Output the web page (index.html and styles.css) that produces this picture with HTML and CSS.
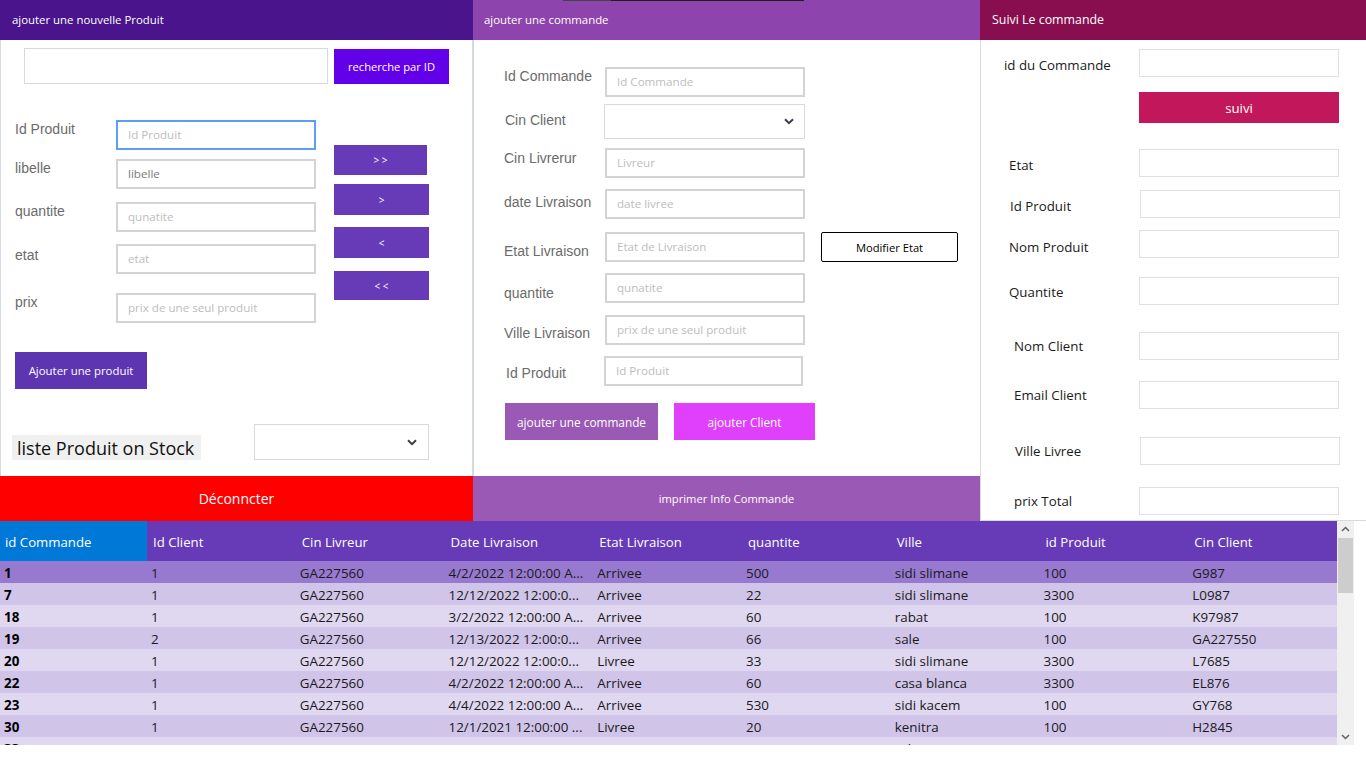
FILE: index.html
```html
<!DOCTYPE html>
<html lang="fr">
<head>
<meta charset="utf-8">
<title>Gestion Commandes</title>
<link rel="stylesheet" href="styles.css">
</head>
<body>
<div class="top">
  <section class="panel">
    <header class="ph ph-1">ajouter une nouvelle Produit</header>
    <div class="pbody p1-body">
      <div class="search-row">
        <input class="search-input" type="text">
        <button class="btn btn-search">recherche par ID</button>
      </div>
      <div class="p1-main">
        <div class="p1-form">
          <div class="frow"><label class="lab1">Id Produit</label><input class="fld fld-focus" placeholder="Id Produit"></div>
          <div class="frow mt-9"><label class="lab1">libelle</label><input class="fld fld-val" value="libelle"></div>
          <div class="frow mt-13"><label class="lab1">quantite</label><input class="fld" placeholder="qunatite"></div>
          <div class="frow mt-12"><label class="lab1 pt-3">etat</label><input class="fld" placeholder="etat"></div>
          <div class="frow mt-19"><label class="lab1">prix</label><input class="fld" placeholder="prix de une seul produit"></div>
        </div>
        <div class="arrows">
          <button class="btn btn-arrow a1">&gt; &gt;</button>
          <button class="btn btn-arrow a2">&gt;</button>
          <button class="btn btn-arrow a3">&lt;</button>
          <button class="btn btn-arrow a4">&lt; &lt;</button>
        </div>
      </div>
      <button class="btn btn-add-prod">Ajouter une produit</button>
      <div class="stock-row">
        <span class="stock-label">liste Produit on Stock</span>
        <div class="select sel-stock"><svg class="chev" width="10" height="7" viewBox="0 0 10 7"><path d="M1 1.2 L5 5.2 L9 1.2" fill="none" stroke="#3a3f4a" stroke-width="2"/></svg></div>
      </div>
    </div>
    <button class="bar bar-red">Déconncter</button>
  </section>

  <section class="panel">
    <header class="ph ph-2"><div class="strip"></div><span class="ph-text">ajouter une commande</span></header>
    <div class="pbody p2-body">
      <div class="frow"><label class="lab1">Id Commande</label><input class="fld" placeholder="Id Commande"></div>
      <div class="frow mt-7"><label class="lab1 pt-8 pl-1">Cin Client</label><div class="select sel-client"><svg class="chev" width="10" height="7" viewBox="0 0 10 7"><path d="M1 1.2 L5 5.2 L9 1.2" fill="none" stroke="#3a3f4a" stroke-width="2"/></svg></div></div>
      <div class="frow mt-9"><label class="lab1 pt-2">Cin Livrerur</label><input class="fld" placeholder="Livreur"></div>
      <div class="frow mt-11"><label class="lab1 pt-5">date Livraison</label><input class="fld" placeholder="date livree"></div>
      <div class="frow mt-13"><label class="lab1 pt-11">Etat Livraison</label><input class="fld" placeholder="Etat de Livraison"><button class="btn-modif">Modifier Etat</button></div>
      <div class="frow mt-11"><label class="lab1 pt-12">quantite</label><input class="fld" placeholder="qunatite"></div>
      <div class="frow mt-12"><label class="lab1 pt-10">Ville Livraison</label><input class="fld" placeholder="prix de une seul produit"></div>
      <div class="frow mt-11"><label class="lab1 pt-9 pl-2">Id Produit</label><input class="fld fld-left fld-narrow" placeholder="Id Produit"></div>
      <div class="cmd-actions">
        <button class="btn btn-add-cmd">ajouter une commande</button>
        <button class="btn btn-add-client">ajouter Client</button>
      </div>
    </div>
    <button class="bar bar-print">imprimer Info Commande</button>
  </section>

  <section class="panel">
    <header class="ph ph-3">Suivi Le commande</header>
    <div class="pbody p3-body">
      <div class="srow"><label class="lab3 la">id du Commande</label><input class="fld3"></div>
      <button class="btn btn-suivi">suivi</button>
      <div class="srow mt-26"><label class="lab3 lb">Etat</label><input class="fld3"></div>
      <div class="srow mt-13"><label class="lab3 lb sh">Id Produit</label><input class="fld3"></div>
      <div class="srow mt-12"><label class="lab3 lb low">Nom Produit</label><input class="fld3"></div>
      <div class="srow mt-19"><label class="lab3 lb mid">Quantite</label><input class="fld3"></div>
      <div class="srow mt-27"><label class="lab3 lc">Nom Client</label><input class="fld3"></div>
      <div class="srow mt-21"><label class="lab3 lc">Email Client</label><input class="fld3"></div>
      <div class="srow mt-28"><label class="lab3 ld">Ville Livree</label><input class="fld3"></div>
      <div class="srow mt-22"><label class="lab3 lc">prix Total</label><input class="fld3"></div>
    </div>
  </section>
</div>

<div class="data">
  <div class="dg">
    <div class="dg-head">
      <div class="hc first">id Commande</div>
      <div class="hc">Id Client</div>
      <div class="hc">Cin Livreur</div>
      <div class="hc">Date Livraison</div>
      <div class="hc">Etat Livraison</div>
      <div class="hc">quantite</div>
      <div class="hc">Ville</div>
      <div class="hc">id Produit</div>
      <div class="hc">Cin Client</div>
    </div>
    <div class="dg-row sel"><div class="c b">1</div><div class="c">1</div><div class="c">GA227560</div><div class="c">4/2/2022 12:00:00 A...</div><div class="c">Arrivee</div><div class="c">500</div><div class="c">sidi slimane</div><div class="c">100</div><div class="c">G987</div></div>
    <div class="dg-row"><div class="c b">7</div><div class="c">1</div><div class="c">GA227560</div><div class="c">12/12/2022 12:00:0...</div><div class="c">Arrivee</div><div class="c">22</div><div class="c">sidi slimane</div><div class="c">3300</div><div class="c">L0987</div></div>
    <div class="dg-row"><div class="c b">18</div><div class="c">1</div><div class="c">GA227560</div><div class="c">3/2/2022 12:00:00 A...</div><div class="c">Arrivee</div><div class="c">60</div><div class="c">rabat</div><div class="c">100</div><div class="c">K97987</div></div>
    <div class="dg-row"><div class="c b">19</div><div class="c">2</div><div class="c">GA227560</div><div class="c">12/13/2022 12:00:0...</div><div class="c">Arrivee</div><div class="c">66</div><div class="c">sale</div><div class="c">100</div><div class="c">GA227550</div></div>
    <div class="dg-row"><div class="c b">20</div><div class="c">1</div><div class="c">GA227560</div><div class="c">12/12/2022 12:00:0...</div><div class="c">Livree</div><div class="c">33</div><div class="c">sidi slimane</div><div class="c">3300</div><div class="c">L7685</div></div>
    <div class="dg-row"><div class="c b">22</div><div class="c">1</div><div class="c">GA227560</div><div class="c">4/2/2022 12:00:00 A...</div><div class="c">Arrivee</div><div class="c">60</div><div class="c">casa blanca</div><div class="c">3300</div><div class="c">EL876</div></div>
    <div class="dg-row"><div class="c b">23</div><div class="c">1</div><div class="c">GA227560</div><div class="c">4/4/2022 12:00:00 A...</div><div class="c">Arrivee</div><div class="c">530</div><div class="c">sidi kacem</div><div class="c">100</div><div class="c">GY768</div></div>
    <div class="dg-row"><div class="c b">30</div><div class="c">1</div><div class="c">GA227560</div><div class="c">12/1/2021 12:00:00 ...</div><div class="c">Livree</div><div class="c">20</div><div class="c">kenitra</div><div class="c">100</div><div class="c">H2845</div></div>
    <div class="dg-row"><div class="c b">33</div><div class="c">1</div><div class="c">GA227560</div><div class="c">5/3/2022 12:00:00 A...</div><div class="c">Livree</div><div class="c">30</div><div class="c">rabat</div><div class="c">3300</div><div class="c">L288</div></div>
  </div>
  <div class="vscroll">
    <div class="sb-arrow"><svg width="17" height="17" viewBox="0 0 17 17"><path d="M5 10 L8.5 6.5 L12 10" fill="none" stroke="#606060" stroke-width="1.5"/></svg></div>
    <div class="sb-track"><div class="sb-thumb"></div></div>
    <div class="sb-arrow"><svg width="17" height="17" viewBox="0 0 17 17"><path d="M5 7 L8.5 10.5 L12 7" fill="none" stroke="#606060" stroke-width="1.5"/></svg></div>
  </div>
</div>
</body>
</html>
```

FILE: styles.css
```css
* { box-sizing: border-box; }

body {
  margin: 0;
  width: 1366px;
  height: 768px;
  overflow: hidden;
  background: #ffffff;
  font-family: "Open Sans", "Noto Sans", sans-serif;
}

button { font-family: "Open Sans", "Noto Sans", sans-serif; cursor: pointer; }

input {
  font-family: "Open Sans", "Noto Sans", sans-serif;
  outline: none;
  margin: 0;
}

/* ---------- top three panels ---------- */
.top {
  display: grid;
  grid-template-columns: 473px 507px 386px;
  height: 521px;
}

.panel {
  display: flex;
  flex-direction: column;
  min-height: 0;
}

.ph {
  flex: none;
  height: 40px;
  line-height: 40px;
  color: #ffffff;
  font-size: 11.4px;
  padding-left: 12px;
  white-space: nowrap;
}
.ph-1 { background: #4a148c; }
.ph-2 {
  background: #8e44ad;
  padding-left: 11px;
  display: flex;
  flex-direction: column;
  line-height: normal;
}
.ph-2 .strip {
  flex: none;
  height: 1px;
  width: 241px;
  margin-left: 79px;
  background: linear-gradient(to right, #444444 0 48px, #1e1e1e 48px);
}
.ph-2 .ph-text { flex: 1; display: flex; align-items: center; padding-bottom: 2px; }
.ph-3 { background: #880e4f; font-size: 12.4px; }

.pbody { flex: 1; min-height: 0; }

/* generic fields */
.frow { display: flex; align-items: flex-start; }

.lab1 {
  flex: none;
  width: 101px;
  font-family: "Liberation Sans", Arial, sans-serif;
  font-size: 14px;
  line-height: 16px;
  color: #6b6b6b;
  padding-top: 1px;
}

.fld {
  flex: none;
  width: 200px;
  height: 30px;
  border: 2px solid #d3d3d3;
  padding: 0 0 1px 10px;
  font-size: 11.6px;
  color: #777777;
  background: #ffffff;
}
.fld::placeholder { color: #bdbdbd; }
.fld-focus { border-color: #5c9df7; }
.fld-val { color: #7a7a7a; }
.fld-left { margin-left: -1px; }
.fld-narrow { width: 199px; }

.select {
  flex: none;
  border: 1px solid #d5dae0;
  background: #ffffff;
  display: flex;
  align-items: center;
  justify-content: flex-end;
}
.chev { display: block; }

.btn {
  border: 0;
  padding: 0;
  color: #ffffff;
  font-size: 11.2px;
}

/* spacing utilities */
.mt-7 { margin-top: 7px; }
.mt-9 { margin-top: 9px; }
.mt-11 { margin-top: 11px; }
.mt-12 { margin-top: 12px; }
.mt-13 { margin-top: 13px; }
.mt-19 { margin-top: 19px; }
.mt-21 { margin-top: 21px; }
.mt-22 { margin-top: 22px; }
.mt-26 { margin-top: 26px; }
.mt-27 { margin-top: 27px; }
.mt-28 { margin-top: 28px; }
.pt-2 { padding-top: 2px; }
.pt-3 { padding-top: 3px; }
.pt-5 { padding-top: 5px; }
.pt-8 { padding-top: 8px; }
.pt-9 { padding-top: 9px; }
.pt-10 { padding-top: 10px; }
.pt-11 { padding-top: 11px; }
.pt-12 { padding-top: 12px; }
.pl-1 { padding-left: 1px; }
.pl-2 { padding-left: 2px; }

/* ---------- panel 1 ---------- */
.p1-body {
  border-left: 1px solid #d5dae0;
  border-right: 1px solid #d5dae0;
  padding-top: 8px;
}

.search-row {
  display: flex;
  align-items: flex-start;
  margin-left: 23px;
  gap: 6px;
}
.search-input {
  width: 304px;
  height: 36px;
  border: 1px solid #d5dae0;
  background: #ffffff;
}
.btn-search {
  width: 115px;
  height: 35px;
  margin-top: 1px;
  background: #6200ea;
  font-size: 11.2px;
}

.p1-main {
  display: flex;
  margin-top: 36px;
  padding-left: 14px;
}
.p1-form { width: 301px; }

.arrows {
  display: flex;
  flex-direction: column;
  margin-left: 18px;
  margin-top: 25px;
}
.btn-arrow {
  background: #673ab7;
  font-size: 10px;
  letter-spacing: 0;
}
.a1 { width: 93px; height: 30px; }
.a2 { width: 95px; height: 31px; margin-top: 9px; }
.a3 { width: 95px; height: 31px; margin-top: 12px; }
.a4 { width: 95px; height: 29px; margin-top: 13px; }

.btn-add-prod {
  display: block;
  width: 132px;
  height: 37px;
  margin: 29px 0 0 14px;
  background: #5e35b1;
  font-size: 11.4px;
}

.stock-row {
  display: flex;
  align-items: flex-end;
  margin-top: 35px;
  padding-left: 11px;
}
.stock-label {
  width: 189px;
  height: 25px;
  line-height: 26px;
  padding-left: 5px;
  background: #f0f0f0;
  color: #111111;
  font-size: 18px;
  white-space: nowrap;
}
.sel-stock {
  width: 175px;
  height: 36px;
  margin-left: 53px;
  padding-right: 11px;
}

.bar {
  flex: none;
  height: 45px;
  border: 0;
  padding: 0;
  color: #ffffff;
  width: 100%;
}
.bar-red { background: #ff0000; font-size: 14px; }
.bar-print { background: #9b59b6; font-size: 11.2px; }

/* ---------- panel 2 ---------- */
.p2-body {
  border-left: 1px solid #d5dae0;
  padding-top: 27px;
  padding-left: 30px;
}
.sel-client {
  width: 201px;
  height: 35px;
  margin-left: -1px;
  padding-right: 10px;
}
.btn-modif {
  flex: none;
  width: 137px;
  height: 30px;
  margin-left: 16px;
  border: 1px solid #000000;
  border-radius: 2px;
  background: #ffffff;
  color: #000000;
  font-size: 11.2px;
  padding: 0;
}
.cmd-actions {
  display: flex;
  gap: 16px;
  margin-top: 17px;
  padding-left: 1px;
}
.btn-add-cmd { width: 153px; height: 37px; background: #9b59b6; font-size: 11.8px; }
.btn-add-client { width: 141px; height: 37px; background: #e040fb; font-size: 11.8px; }

/* ---------- panel 3 ---------- */
.p3-body {
  border-left: 1px solid #d5dae0;
  border-bottom: 1px solid #d5dae0;
  padding-top: 9px;
}
.srow { display: flex; align-items: center; }
.lab3 {
  flex: none;
  width: 158px;
  font-size: 13.3px;
  line-height: 18px;
  padding-top: 4px;
  color: #1a1a1a;
  white-space: nowrap;
}
.la { padding-left: 23px; }
.lb { padding-left: 28px; }
.lc { padding-left: 33px; padding-top: 0; }
.ld { padding-left: 34px; padding-top: 0; width: 159px; }
.lab3.sh { padding-left: 29px; width: 159px; }
.lab3.low { padding-top: 5px; }
.lab3.mid { padding-top: 2px; }
.fld3 {
  flex: none;
  width: 200px;
  height: 28px;
  border: 1px solid #e0e0e0;
  background: #ffffff;
}
.btn-suivi {
  display: block;
  width: 200px;
  height: 31px;
  margin: 15px 0 0 158px;
  background: #c2185b;
  font-size: 13.2px;
}

/* ---------- data grid ---------- */
.data {
  display: flex;
  height: 224px;
}
.dg {
  width: 1337px;
  flex: none;
  overflow: hidden;
}
.dg-head,
.dg-row {
  display: grid;
  grid-template-columns: 147px repeat(8, 1fr);
}
.dg-head {
  height: 40px;
  background: #673ab7;
  color: #ffffff;
  font-size: 13.2px;
}
.hc {
  display: flex;
  align-items: center;
  padding: 1px 0 0 6px;
  white-space: nowrap;
}
.hc.first { background: #0078d7; padding-left: 5px; }

.dg-row {
  height: 22px;
  align-items: center;
  font-size: 13.4px;
  color: #1a1a1a;
}
.dg-row:nth-child(odd) { background: #d1c4e9; }
.dg-row:nth-child(even) { background: #e0d7f0; }
.dg-row.sel { background: #977acf; }
.c {
  padding: 1px 0 0 4px;
  white-space: nowrap;
  overflow: hidden;
}
.c.b { font-weight: 700; color: #000000; }

.vscroll {
  flex: none;
  width: 17px;
  background: #f0f0f0;
  display: flex;
  flex-direction: column;
}
.sb-arrow { height: 17px; flex: none; }
.sb-arrow svg { display: block; }
.sb-track { flex: 1; }
.sb-thumb {
  width: 15px;
  height: 55px;
  margin-left: 1px;
  background: #cdcdcd;
}
```
